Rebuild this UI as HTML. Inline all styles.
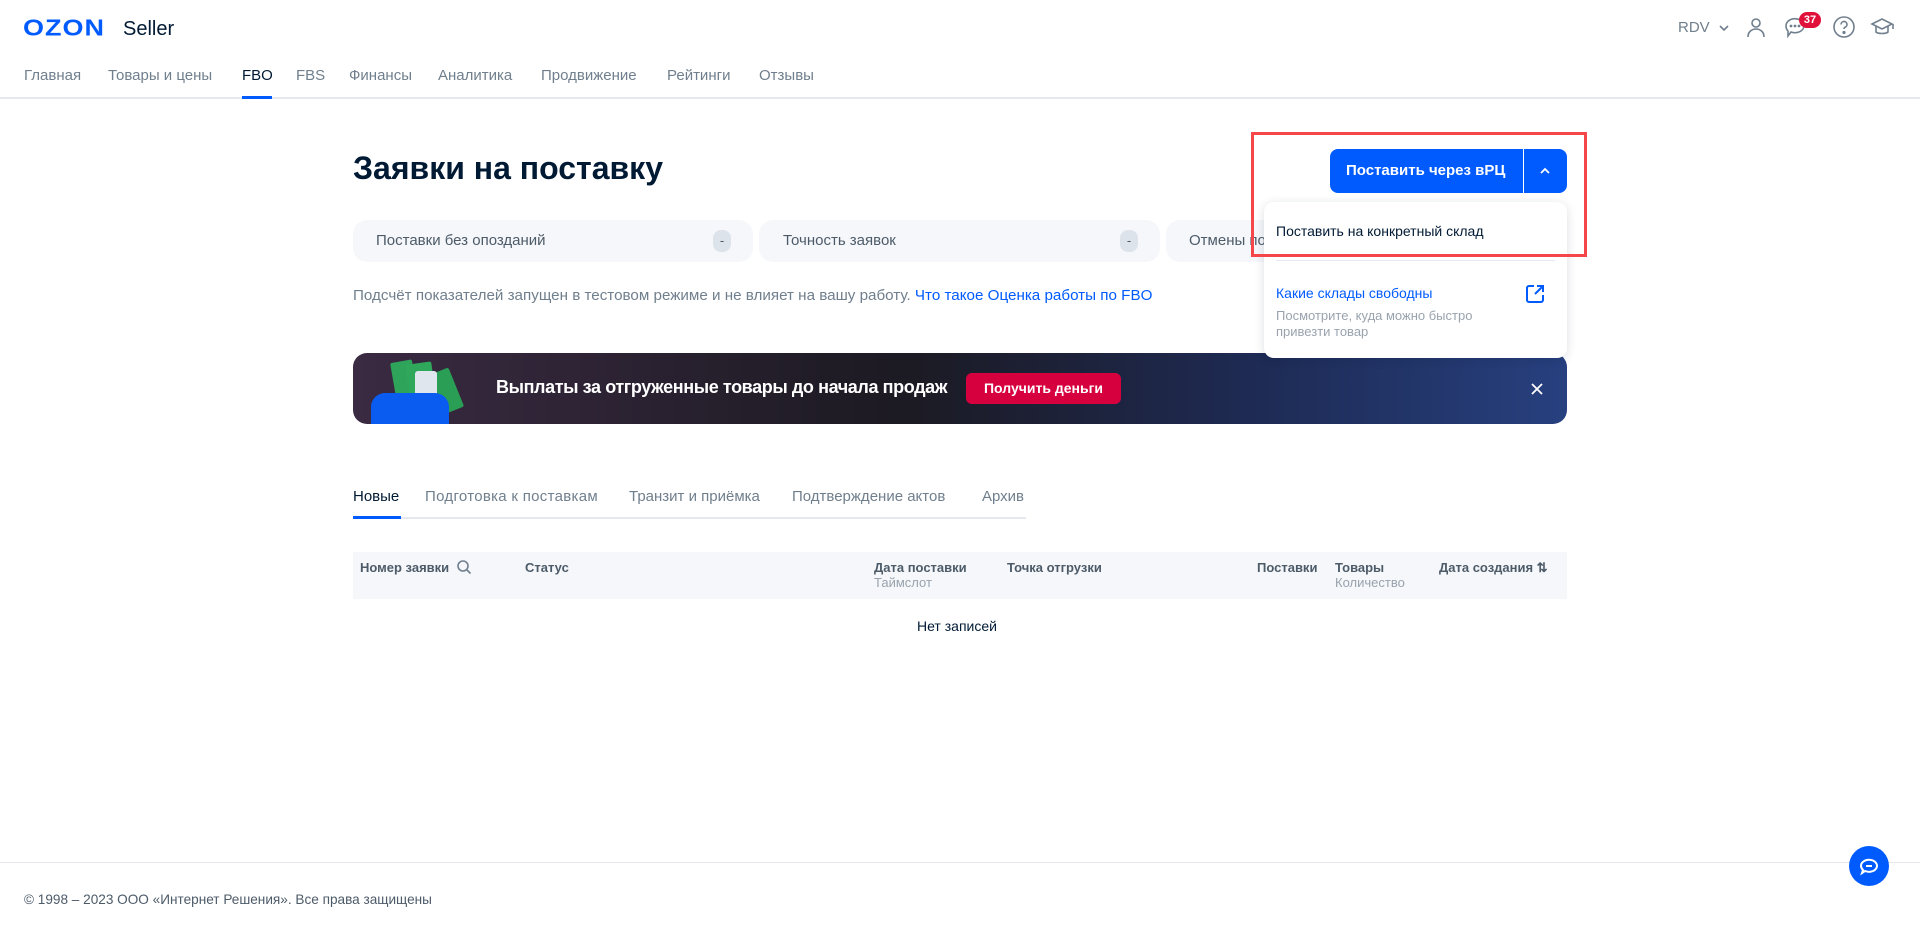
<!DOCTYPE html>
<html><head><meta charset="utf-8"><style>
*{box-sizing:border-box;margin:0;padding:0}
body{width:1920px;height:937px;background:#fff;font-family:"Liberation Sans",sans-serif;color:#001a34;position:relative;overflow:hidden}
.a{position:absolute;white-space:nowrap}
.nav span{position:absolute;top:67px;font-size:15px;color:#707f8d}
</style></head><body>
<div class="a" style="left:23px;top:13px;font-size:27px;font-weight:900;color:#005bff;letter-spacing:1px;transform:scaleY(0.85);transform-origin:left center">OZON</div>
<div class="a" style="left:123px;top:18px;font-size:20px;color:#001a34">Seller</div>
<div class="nav">
<span style="left:24px">Главная</span><span style="left:108px">Товары и цены</span><span style="left:242px;color:#001a34">FBO</span><span style="left:296px">FBS</span><span style="left:349px">Финансы</span><span style="left:438px">Аналитика</span><span style="left:541px">Продвижение</span><span style="left:667px">Рейтинги</span><span style="left:759px">Отзывы</span>
</div>
<div class="a" style="left:0;top:97px;width:1920px;height:2px;background:#e5e9ef"></div>
<div class="a" style="left:242px;top:96px;width:30px;height:3px;background:#005bff"></div>
<div class="a" style="left:1678px;top:19px;font-size:15px;color:#707f8d">RDV</div>
<svg class="a" style="left:1716px;top:20px" width="16" height="16" viewBox="0 0 16 16"><path d="M4 6l4 4 4-4" stroke="#707f8d" stroke-width="1.6" fill="none"/></svg>
<svg class="a" style="left:1744px;top:15px" width="24" height="24" viewBox="0 0 24 24" fill="none" stroke="#707f8d" stroke-width="1.6"><circle cx="12" cy="8" r="4"/><path d="M4 22c0-5 3.5-8 8-8s8 3 8 8"/></svg>
<svg class="a" style="left:1783px;top:15px" width="24" height="24" viewBox="0 0 24 24" fill="none" stroke="#707f8d" stroke-width="1.6"><path d="M3 11a9 7 0 1 1 5 6l-3 4v-5a7 7 0 0 1-2-5z"/><circle cx="8" cy="11" r=".6" fill="#707f8d"/><circle cx="12" cy="11" r=".6" fill="#707f8d"/><circle cx="16" cy="11" r=".6" fill="#707f8d"/></svg>
<div class="a" style="left:1799px;top:12px;width:22px;height:16px;border-radius:8px;background:#e0103a;color:#fff;font-size:11px;font-weight:bold;text-align:center;line-height:16px">37</div>
<svg class="a" style="left:1832px;top:15px" width="24" height="24" viewBox="0 0 24 24" fill="none" stroke="#707f8d" stroke-width="1.6"><circle cx="12" cy="12" r="10"/><path d="M9 9.5a3 3 0 1 1 4 2.8c-.8.4-1 1-1 1.7"/><circle cx="12" cy="17.5" r=".8" fill="#707f8d"/></svg>
<svg class="a" style="left:1870px;top:15px" width="26" height="24" viewBox="0 0 26 24" fill="none" stroke="#707f8d" stroke-width="1.6"><path d="M2 9l10-5 10 5-10 5z"/><path d="M6 11v6c2 2 10 2 12 0v-6"/><path d="M23 9v5"/></svg>

<div class="a" style="left:353px;top:150px;font-size:32px;font-weight:bold;color:#001a34">Заявки на поставку</div>

<div class="a" style="left:353px;top:220px;width:400px;height:42px;border-radius:14px;background:#f5f7fa"></div>
<div class="a" style="left:376px;top:232px;font-size:15px;color:#4d5b69">Поставки без опозданий</div>
<div class="a" style="left:713px;top:230px;width:18px;height:22px;border-radius:8px;background:#dde3ea;font-size:13px;text-align:center;line-height:22px;color:#4d5b69">-</div>
<div class="a" style="left:759px;top:220px;width:401px;height:42px;border-radius:14px;background:#f5f7fa"></div>
<div class="a" style="left:783px;top:232px;font-size:15px;color:#4d5b69">Точность заявок</div>
<div class="a" style="left:1120px;top:230px;width:18px;height:22px;border-radius:8px;background:#dde3ea;font-size:13px;text-align:center;line-height:22px;color:#4d5b69">-</div>
<div class="a" style="left:1166px;top:220px;width:160px;height:42px;border-radius:14px 0 0 14px;background:#f5f7fa"></div>
<div class="a" style="left:1189px;top:232px;font-size:15px;color:#4d5b69">Отмены по</div>

<div class="a" style="left:353px;top:287px;font-size:15.2px;color:#707f8d">Подсчёт показателей запущен в тестовом режиме и не влияет на вашу работу. <span style="color:#005bff">Что такое Оценка работы по FBO</span></div>

<div class="a" style="left:353px;top:353px;width:1214px;height:71px;border-radius:14px;background:linear-gradient(90deg,#3a2a42 0%,#1c1a22 45%,#1e2b55 75%,#27407f 100%);overflow:hidden">
<div class="a" style="left:40px;top:8px;width:22px;height:36px;background:#2ea35a;transform:rotate(-10deg);border-radius:2px"></div>
<div class="a" style="left:55px;top:10px;width:26px;height:40px;background:#30a85c;transform:rotate(-8deg);border-radius:2px"></div>
<div class="a" style="left:82px;top:17px;width:22px;height:42px;background:#2b9e55;transform:rotate(-22deg);border-radius:2px"></div>
<div class="a" style="left:62px;top:18px;width:22px;height:26px;background:#dfe6ee;border-radius:3px"></div>
<div class="a" style="left:18px;top:40px;width:78px;height:40px;background:#0a5cf0;border-radius:14px 14px 0 0"></div>
<div class="a" style="left:143px;top:24px;font-size:18px;font-weight:bold;color:#fff;letter-spacing:-0.4px">Выплаты за отгруженные товары до начала продаж</div>
<div class="a" style="left:613px;top:20px;width:155px;height:31px;border-radius:6px;background:#d7003f;color:#fff;font-size:14px;font-weight:bold;text-align:center;line-height:31px">Получить деньги</div>
<svg class="a" style="left:1176px;top:28px" width="16" height="16" viewBox="0 0 16 16"><path d="M3 3l10 10M13 3L3 13" stroke="#fff" stroke-width="1.8"/></svg>
</div>

<div class="a" style="left:353px;top:488px;font-size:15px;color:#001a34">Новые</div>
<div class="a" style="left:425px;top:488px;font-size:15px;color:#707f8d;letter-spacing:0.3px">Подготовка к поставкам</div>
<div class="a" style="left:629px;top:488px;font-size:15px;color:#707f8d">Транзит и приёмка</div>
<div class="a" style="left:792px;top:488px;font-size:15px;color:#707f8d">Подтверждение актов</div>
<div class="a" style="left:982px;top:488px;font-size:15px;color:#707f8d">Архив</div>
<div class="a" style="left:353px;top:517px;width:673px;height:2px;background:#e5e9ef"></div>
<div class="a" style="left:353px;top:516px;width:48px;height:3px;background:#005bff"></div>

<div class="a" style="left:353px;top:552px;width:1214px;height:47px;background:#f5f7fa"></div>
<div class="a" style="left:360px;top:560px;font-size:13px;font-weight:bold;color:#4d5b69">Номер заявки</div>
<svg class="a" style="left:456px;top:559px" width="16" height="16" viewBox="0 0 16 16" fill="none" stroke="#707f8d" stroke-width="1.6"><circle cx="7" cy="7" r="5"/><path d="M11 11l3.5 3.5"/></svg>
<div class="a" style="left:525px;top:560px;font-size:13px;font-weight:bold;color:#4d5b69">Статус</div>
<div class="a" style="left:874px;top:560px;font-size:13px;font-weight:bold;color:#4d5b69">Дата поставки</div>
<div class="a" style="left:874px;top:575px;font-size:13px;color:#99a3ae">Таймслот</div>
<div class="a" style="left:1007px;top:560px;font-size:13px;font-weight:bold;color:#4d5b69">Точка отгрузки</div>
<div class="a" style="left:1257px;top:560px;font-size:13px;font-weight:bold;color:#4d5b69">Поставки</div>
<div class="a" style="left:1335px;top:560px;font-size:13px;font-weight:bold;color:#4d5b69">Товары</div>
<div class="a" style="left:1335px;top:575px;font-size:13px;color:#99a3ae">Количество</div>
<div class="a" style="left:1439px;top:560px;font-size:13px;font-weight:bold;color:#4d5b69">Дата создания ⇅</div>
<div class="a" style="left:917px;top:618px;font-size:14px;color:#001a34">Нет записей</div>

<div class="a" style="left:1330px;top:149px;width:237px;height:44px;border-radius:8px;background:#005bff"></div>
<div class="a" style="left:1346px;top:162px;font-size:15px;font-weight:bold;color:#fff">Поставить через вРЦ</div>
<div class="a" style="left:1523px;top:149px;width:1px;height:44px;background:#fff"></div>
<svg class="a" style="left:1537px;top:163px" width="16" height="16" viewBox="0 0 16 16"><path d="M4 10l4-4 4 4" stroke="#fff" stroke-width="1.8" fill="none"/></svg>

<div class="a" style="left:1264px;top:202px;width:303px;height:156px;border-radius:10px;background:#fff;box-shadow:0 2px 10px rgba(0,26,52,.14)"></div>
<div class="a" style="left:1276px;top:223px;font-size:14px;color:#001a34">Поставить на конкретный склад</div>
<div class="a" style="left:1276px;top:260px;width:279px;height:1px;background:#e5e9ef"></div>
<div class="a" style="left:1276px;top:285px;font-size:14px;color:#005bff">Какие склады свободны</div>
<div class="a" style="left:1276px;top:308px;font-size:13px;color:#99a3ae;line-height:16px;white-space:normal;width:230px">Посмотрите, куда можно быстро привезти товар</div>
<svg class="a" style="left:1524px;top:283px" width="22" height="22" viewBox="0 0 22 22" fill="none" stroke="#005bff" stroke-width="2"><path d="M10 3H5a2 2 0 0 0-2 2v12a2 2 0 0 0 2 2h12a2 2 0 0 0 2-2v-5"/><path d="M13 3h6v6M19 3l-8 8"/></svg>

<div class="a" style="left:1251px;top:132px;width:336px;height:125px;border:3px solid #f5464a"></div>

<div class="a" style="left:0;top:862px;width:1920px;height:1px;background:#e5e9ef"></div>
<div class="a" style="left:24px;top:892px;font-size:13.6px;color:#4d5b69">© 1998 – 2023 ООО «Интернет Решения». Все права защищены</div>
<div class="a" style="left:1849px;top:846px;width:40px;height:40px;border-radius:50%;background:#005bff"></div>
<svg class="a" style="left:1857px;top:854px" width="24" height="24" viewBox="0 0 24 24" fill="none" stroke="#fff" stroke-width="2"><path d="M4 12a8 6 0 1 1 4 5l-3 2 1-3a6 6 0 0 1-2-4z"/><path d="M9 12h6"/></svg>
</body></html>
